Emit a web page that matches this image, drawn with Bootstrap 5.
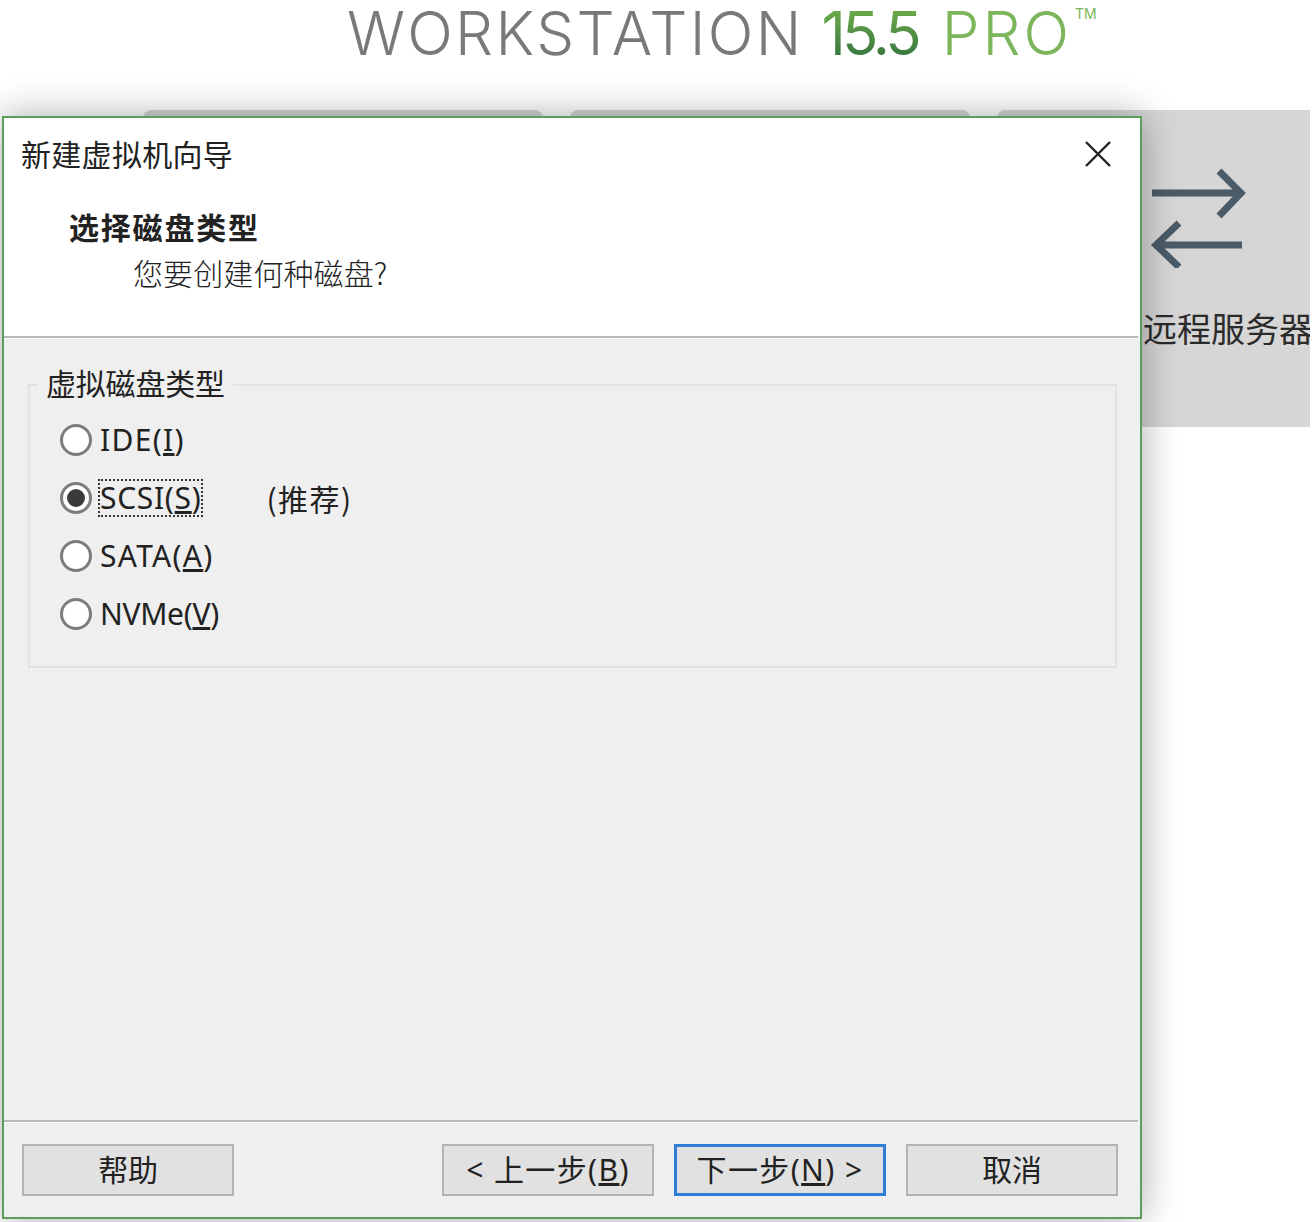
<!DOCTYPE html>
<html lang="zh-CN">
<head>
<meta charset="utf-8">
<title>新建虚拟机向导</title>
<link href="https://cdn.jsdelivr.net/npm/bootstrap@5.3.0/dist/css/bootstrap.min.css" rel="stylesheet">
<style>
html,body{height:100%;}
body{background:#fff;width:1314px;height:1222px;overflow:hidden;position:relative;font-family:"Noto Sans","Noto Sans CJK SC",sans-serif;color:#222;}
.logo-bar{height:110px;padding-left:347px;font-family:"Inter","Lato",sans-serif;font-weight:300;font-size:60px;line-height:66px;white-space:nowrap;letter-spacing:2.3px;color:#77797b;}
.logo-num{font-weight:400;letter-spacing:-4px;margin-left:18px;background:linear-gradient(#7ab84e,#2a6a3c);-webkit-background-clip:text;background-clip:text;color:transparent;}
.logo-pro{color:#7db65a;margin-left:24px;letter-spacing:3px;}
.logo-tm{font-size:14px;line-height:0;font-weight:400;vertical-align:36px;color:#7db65a;letter-spacing:0;margin-left:3px;}
.tile-row{width:1310px;height:317px;padding-left:143px;gap:27px;overflow:hidden;}
.tile{flex:0 0 400px;background:#d6d6d6;height:317px;padding-top:52px;border-radius:8px 8px 0 0;}
.tile-label{font-family:"Noto Sans CJK SC",sans-serif;font-size:34px;line-height:48px;margin:36px 0 0 -6px;color:#2b2b2b;white-space:nowrap;}
.dlg{position:absolute;left:2px;top:116px;width:1140px;height:1103px;background:#efefef;border:2px solid #5f9d5c;box-shadow:0 0 36px rgba(0,0,0,.33);font-size:30px;line-height:40px;font-family:"Noto Sans","Noto Sans CJK SC",sans-serif;}
.dlg-head{height:218px;background:#fff;position:relative;padding:15px 0 0 17px;}
.dlg-title{font-family:"Noto Sans CJK SC",sans-serif;font-size:30px;letter-spacing:.3px;}
.dlg-step{font-family:"Noto Sans CJK SC",sans-serif;font-weight:700;font-size:30px;letter-spacing:1.8px;margin:33px 0 0 48px;line-height:40px;}
.dlg-ask{font-family:"Noto Sans CJK SC",sans-serif;font-weight:300;letter-spacing:.1px;margin:6px 0 0 112px;line-height:40px;}
.close-x{position:absolute;right:28px;top:22px;width:28px;height:28px;}
.rule{height:3px;background:#b8b8b8;border-bottom:1px solid #fff;margin-right:2px;}
.dlg-main{flex:1 1 auto;padding:45px 23px 0 24px;}
.grp{border:2px solid #e2e2e2;height:284px;position:relative;padding:25px 0 0 30px;}
.grp-title{position:absolute;left:8px;top:-24px;padding:0 8px;background:#efefef;font-family:"Noto Sans CJK SC",sans-serif;line-height:40px;letter-spacing:-.2px;}
.opt{height:58px;gap:8px;}
.dot{width:32px;height:32px;border-radius:50%;border:3px solid #7c7c7c;background:#fff;flex:none;}
.dot-on{position:relative;}
.dot-on::after{content:"";position:absolute;left:4px;top:4px;width:18px;height:18px;border-radius:50%;background:#3a3a3a;}
.opt-text{font-size:30px;letter-spacing:.7px;line-height:34px;white-space:nowrap;}
.opt-wide{letter-spacing:1.3px;}
.opt-tight{letter-spacing:-.3px;}
.opt-focus{outline:2px dotted #333;}
.opt-note{margin-left:57px;letter-spacing:1.5px;font-family:"Noto Sans CJK SC",sans-serif;}
.dlg-foot{height:94px;padding:21px 22px 0 18px;}
.wbtn{width:212px;height:52px;padding:0;background:#e1e1e1;border:2px solid #b3b3b3;border-radius:0;font-size:30px;line-height:44px;color:#222;font-family:"Noto Sans","Noto Sans CJK SC",sans-serif;letter-spacing:-.3px;white-space:nowrap;}
.wbtn-wide{letter-spacing:1.4px;}
.wbtn-on{border:3px solid #2f7bd6;}
.wbtn-set{gap:20px;}
</style>
</head>
<body>
<div class="logo-bar">WORKSTATION<span class="logo-num">15.5</span><span class="logo-pro">PRO</span><span class="logo-tm">TM</span></div>
<div class="tile-row d-flex">
  <div class="tile"></div>
  <div class="tile"></div>
  <div class="tile d-flex flex-column align-items-center">
    <svg width="100" height="106" viewBox="0 0 100 106" fill="none" stroke="#4b5b68" stroke-width="7">
      <path d="M5 31H90M72 9L94 31L72 54"/>
      <path d="M95 83H11M32 61L9 83L32 105"/>
    </svg>
    <div class="tile-label">连接远程服务器</div>
  </div>
</div>
<div class="dlg d-flex flex-column">
  <div class="dlg-head">
    <div class="dlg-title">新建虚拟机向导</div>
    <svg class="close-x" viewBox="0 0 28 28" stroke="#222" stroke-width="2.4" fill="none"><path d="M2 2L26 26M26 2L2 26"/></svg>
    <div class="dlg-step">选择磁盘类型</div>
    <div class="dlg-ask">您要创建何种磁盘?</div>
  </div>
  <div class="rule"></div>
  <div class="dlg-main">
    <div class="grp">
      <div class="grp-title">虚拟磁盘类型</div>
      <div class="opt d-flex align-items-center"><span class="dot"></span><span class="opt-text opt-wide">IDE(<u>I</u>)</span></div>
      <div class="opt d-flex align-items-center"><span class="dot dot-on"></span><span class="opt-text opt-focus">SCSI(<u>S</u>)</span><span class="opt-text opt-note">(推荐)</span></div>
      <div class="opt d-flex align-items-center"><span class="dot"></span><span class="opt-text opt-wide">SATA(<u>A</u>)</span></div>
      <div class="opt d-flex align-items-center"><span class="dot"></span><span class="opt-text opt-tight">NVMe(<u>V</u>)</span></div>
    </div>
  </div>
  <div class="rule"></div>
  <div class="dlg-foot d-flex justify-content-between">
    <button type="button" class="btn wbtn">帮助</button>
    <div class="d-flex wbtn-set">
      <button type="button" class="btn wbtn wbtn-wide">&lt; 上一步(<u>B</u>)</button>
      <button type="button" class="btn wbtn wbtn-on wbtn-wide">下一步(<u>N</u>) &gt;</button>
      <button type="button" class="btn wbtn">取消</button>
    </div>
  </div>
</div>
<script src="https://cdn.jsdelivr.net/npm/bootstrap@5.3.0/dist/js/bootstrap.bundle.min.js"></script>
</body>
</html>
